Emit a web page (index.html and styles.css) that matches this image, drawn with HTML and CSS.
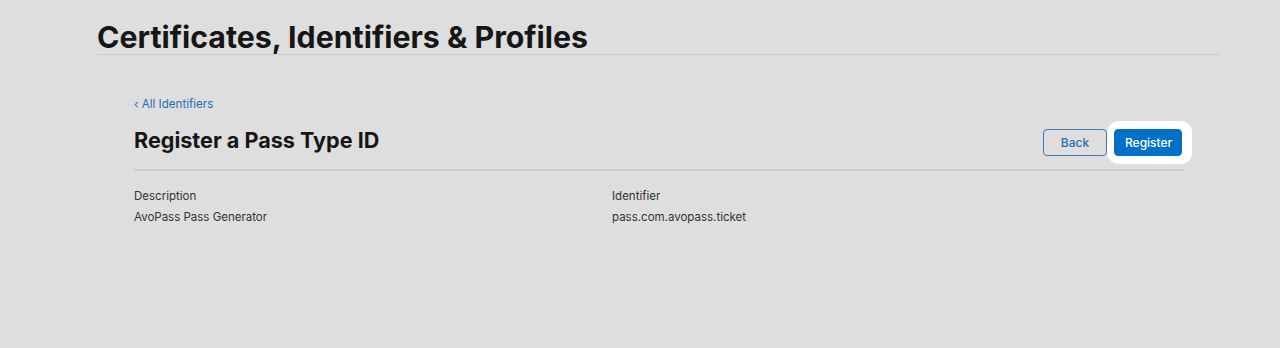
FILE: index.html
```html
<!DOCTYPE html>
<html>
<head>
<meta name="viewport" content="width=device-width, initial-scale=1.0">
<link rel="stylesheet" href="styles.css">
</head>
<body>

<div class="page">
  <h1 class="page-title">Certificates, Identifiers &amp; Profiles</h1>

  <div class="content">
    <a class="back-link" href="#">&lsaquo; All Identifiers</a>
    <div class="title-row">
      <h2 class="section-title">Register a Pass Type ID</h2>
      <div class="actions">
        <button class="btn btn-secondary">Back</button>
        <button class="btn btn-primary spotlight">Register</button>
      </div>
    </div>

    <div class="fields">
      <div class="field">
        <div class="field-label">Description</div>
        <div class="field-value">AvoPass Pass Generator</div>
      </div>
      <div class="field">
        <div class="field-label">Identifier</div>
        <div class="field-value">pass.com.avopass.ticket</div>
      </div>
    </div>
  </div>
</div>

</body>
</html>
```

FILE: styles.css
```css
* {box-sizing: border-box;}
body {
  margin: 0;
  background: #dedede;
  font-family: Inter, "Noto Sans", Arial, sans-serif;
  color: #1d1d1f;
}
.page {
  padding: 0 60px 0 97px;
}
.page-title {
  margin: 0;
  padding-top: 20px;
  font-size: 30.3px;
  font-weight: 700;
  line-height: 34px;
  color: #161616;
  border-bottom: 1px solid #cbcbcb;
}
.content {
  padding: 0 36px 0 37px;
}
.back-link {
  display: block;
  margin-top: 41px;
  font-size: 11.6px;
  line-height: 16px;
  color: #1f6fb8;
  text-decoration: none;
}
.title-row {
  display: flex;
  justify-content: space-between;
  align-items: flex-start;
  margin-top: 17px;
  padding-bottom: 13px;
  border-bottom: 2px solid #cdcdcd;
}
.section-title {
  margin: 0;
  font-size: 21.6px;
  font-weight: 700;
  line-height: 22px;
  color: #161616;
}
.actions {
  display: flex;
  gap: 7px;
  padding-right: 2px;
}
.btn {
  height: 27px;
  padding: 0 10px;
  font-family: inherit;
  font-size: 12px;
  font-weight: 500;
  border-radius: 4px;
  cursor: pointer;
}
.btn-secondary {
  width: 64px;
  background: transparent;
  color: #2b6fae;
  border: 1px solid #3d7ab5;
}
.btn-primary {
  width: 68px;
  background: #0070c9;
  color: #fff;
  border: 1px solid #0070c9;
}
.spotlight {
  box-shadow: 0 0 0 7px #fff, 2px 0 0 8px #fff;
}
.fields {
  display: grid;
  grid-template-columns: 478px 1fr;
  margin-top: 17px;
}
.field-label {
  font-size: 11.5px;
  line-height: 16px;
  color: #333;
}
.field-value {
  margin-top: 5px;
  font-size: 11.5px;
  line-height: 16px;
  color: #333;
}
```
